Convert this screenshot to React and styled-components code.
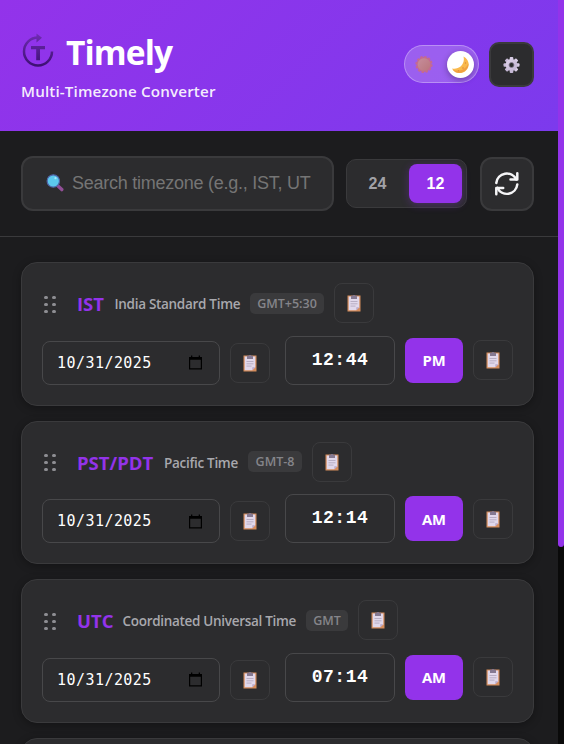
import React from "react";
import styled, { createGlobalStyle } from "styled-components";

const Global = createGlobalStyle`
  * { box-sizing: border-box; }
  html, body { margin: 0; height: 744px; overflow: hidden; background: #1c1c1e; }
  body { font-family: "Open Sans", "Noto Sans", sans-serif; color: #fff; }
  button, input { font-family: inherit; margin: 0; }
`;
const Window = styled.div`display: flex; width: 564px; height: 744px; overflow: hidden;`;
const Page = styled.main`width: 558px; height: 744px; overflow: hidden; background: #1c1c1e;`;
const Track = styled.div`width: 6px; height: 744px; background: #0a0a0a;`;
const Thumb = styled.div`height: 547px; background: #9333ea; border-radius: 0 0 3px 3px;`;

const Header = styled.header`
  display: flex; justify-content: space-between; align-items: flex-start;
  height: 131px; padding: 31px 24px 0 21px;
  background: linear-gradient(135deg, #9333ea 0%, #7c3aed 100%);
`;
const Brand = styled.div`display: flex; flex-direction: column;`;
const TitleRow = styled.div`display: flex; align-items: flex-start; gap: 11px; height: 48px;`;
const Title = styled.h1`
  margin: 0; font-size: 33.5px; line-height: 43px; font-weight: 700; white-space: nowrap;
  letter-spacing: -.9px;
`;
const Tagline = styled.p`
  margin: 0; font-size: 15.2px; line-height: 24px; font-weight: 600; color: rgba(255,255,255,.92);
  letter-spacing: .14px; white-space: nowrap;
`;
const HeaderActions = styled.div`display: flex; align-items: flex-start; gap: 10px; padding-top: 11px;`;
const ThemeSwitch = styled.div`
  display: flex; align-items: center; justify-content: space-between; margin-top: 3px;
  width: 75px; height: 38px; padding: 0 4px 0 10px; border-radius: 19px;
  border: 1px solid rgba(255,255,255,.3); background: rgba(255,255,255,.2);
`;
const Knob = styled.span`
  display: flex; align-items: center; justify-content: center; width: 27px; height: 27px;
  border-radius: 50%; background: #fff; box-shadow: 0 2px 6px rgba(0,0,0,.3);
`;
const SquareButton = styled.button`
  display: flex; align-items: center; justify-content: center; padding: 0;
  width: ${(p) => p.$size}px; height: ${(p) => p.$size}px; color: #fff;
  border: 2px solid #3a3a3c; border-radius: ${(p) => p.$radius}px; background: #2c2c2e;
`;
const Toolbar = styled.section`
  display: flex; align-items: center; height: 106px; padding: 0 24px 0 21px;
  border-bottom: 1px solid #3a3a3c;
`;
const Search = styled.div`
  display: flex; align-items: center; gap: 8px; width: 313px; height: 55px; padding: 0 14px 1px 23px;
  border: 2px solid #3a3a3c; border-radius: 12px; background: #2c2c2e; margin-right: 12px;
`;
const SearchText = styled.span`
  font: 18px/24px "Liberation Sans", Arial, sans-serif; color: #757575; white-space: nowrap;
  letter-spacing: -.25px;
`;
const Segments = styled.div`
  display: flex; gap: 5px; width: 121px; height: 49px; padding: 4px; margin-right: 13px;
  border: 1px solid #3a3a3c; border-radius: 10px; background: #2c2c2e;
`;
const Segment = styled.button`
  width: 53px; height: 39px; padding: 0; border: 0; border-radius: 8px;
  font: bold 16px "Liberation Sans", Arial, sans-serif;
  color: ${(p) => (p.$active ? "#fff" : "#a1a1a6")};
  background: ${(p) => (p.$active ? "#9333ea" : "transparent")};
  box-shadow: ${(p) => (p.$active ? "0 2px 8px rgba(147,51,234,.3)" : "none")};
`;
const List = styled.section`display: flex; flex-direction: column; gap: 15px; padding: 25px 24px 0 21px;`;
const Card = styled.article`
  flex: none; height: 143.5px; padding: 20px; border: 1px solid #3a3a3c; border-radius: 16px;
  background: #2c2c2e; box-shadow: 0 2px 8px rgba(0,0,0,.3);
`;
const CardHead = styled.div`display: flex; align-items: center; height: 40px;`;
const Grip = styled.div`
  display: grid; grid-template-columns: 4px 4px; gap: 4px; width: 35px; padding: 2px 0 0 2px;
`;
const Dot = styled.i`width: 4px; height: 3px; border-radius: 1.5px; background: #8e8e93;`;
const Code = styled.strong`
  width: ${(p) => p.$w}px; margin-right: 10px; padding-top: 2px; font-size: 18.5px; line-height: 26px;
  font-weight: 700; color: #9333ea; white-space: nowrap;
`;
const Name = styled.span`
  width: ${(p) => p.$w}px; margin-right: 10px; padding-top: 2px; font-size: 13.5px; line-height: 20px;
  font-weight: 600; color: #a8a8ad; white-space: nowrap; letter-spacing: -.3px;
`;
const Offset = styled.span`
  display: flex; align-items: center; justify-content: center; width: ${(p) => p.$w}px; height: 21px;
  margin-right: 10px; border-radius: 5px; background: #3a3a3c; color: #85858a;
  font-size: 12.5px; font-weight: 600; letter-spacing: 0; white-space: nowrap;
`;
const CopyButton = styled.button`
  display: flex; align-items: center; justify-content: center; flex: none; width: 40px; height: 40px;
  padding: 1px 0 0; border: 1px solid #3a3a3c; border-radius: 8px; background: transparent;
`;
const Fields = styled.div`display: flex; align-items: flex-end; gap: 15px; margin-top: 12.5px; height: 49px;`;
const Group = styled.div`display: flex; align-items: center; gap: 10px;`;
const DateField = styled.div`
  display: flex; align-items: center; justify-content: space-between; width: 178px; height: 44px;
  padding: 0 17px 0 14px; border: 1px solid #48484a; border-radius: 8px;
  font: 15px/20px "DejaVu Sans Mono", monospace; letter-spacing: .45px; color: #fff;
`;
const TimeField = styled.div`
  display: flex; align-items: center; justify-content: center; width: 110px; height: 49px;
  padding-bottom: 1px; border: 1px solid #48484a; border-radius: 8px;
  font: bold 18px/22px "Liberation Mono", monospace; letter-spacing: .5px;
`;
const Meridiem = styled.button`
  width: 58px; height: 45px; padding: 0; border: 0; border-radius: 8px; background: #9333ea;
  color: #fff; font-size: 14.8px; font-weight: 700;
`;

const Logo = () => (
  <svg width="34" height="38" viewBox="0 0 34 38" fill="none">
    <defs>
      <linearGradient id="ink" gradientUnits="userSpaceOnUse" x1="0" y1="2" x2="0" y2="36">
        <stop offset="0" stopColor="#712cb5" /><stop offset="1" stopColor="#3b0f70" />
      </linearGradient>
    </defs>
    <path d="M17 6.500A14 14 0 1 0 31 20.500" stroke="url(#ink)" strokeWidth="2.500" />
    <path d="M15.500 2.500l5.500 4.300L15.500 11.500z" fill="url(#ink)" />
    <path d="M10 15h14v3.300h-5v11h-3.800v-11H10z" fill="url(#ink)" />
  </svg>
);
const Sun = () => (
  <svg width="18" height="18" viewBox="0 0 18 18">
    <defs><linearGradient id="sun" x1="0" y1="0" x2="1" y2="1">
      <stop offset="0" stopColor="#c68d9c" /><stop offset="1" stopColor="#b9767c" />
    </linearGradient></defs>
    <circle cx="9" cy="9.500" r="7.600" fill="#c46a91" stroke="#c46a91" strokeWidth="2" strokeDasharray="2.300 1.680" />
    <circle cx="9" cy="9.500" r="6.300" fill="url(#sun)" />
  </svg>
);
const Moon = () => (
  <svg width="19" height="19" viewBox="0 0 19 19">
    <path d="M12.500 1.500C18.500 4.500 19.500 12 14.500 16C10 19.500 3.500 18.500 1 13.500C7.500 15 14.500 9.500 12.500 1.500Z" fill="#f9b94c" />
    <path d="M1.600 14.400c5.400 2.600 12.900 1.100 15.900-6.200 0 9-10.900 13.200-15.900 6.200Z" fill="#f0a040" />
    <g fill="#dc8a3a"><circle cx="14.500" cy="8" r=".7" /><circle cx="12" cy="13" r=".8" /><circle cx="7.500" cy="15.700" r=".7" /></g>
  </svg>
);
const Gear = () => (
  <svg width="18" height="18" viewBox="0 0 18 18">
    <defs><linearGradient id="gear" gradientUnits="userSpaceOnUse" x1="1" y1="1" x2="17" y2="17">
      <stop offset="0" stopColor="#e5daf0" /><stop offset="1" stopColor="#b7a9c9" />
    </linearGradient></defs>
    <g fill="url(#gear)">
      {[0, 45, 90, 135].map((a) => <rect key={a} x="6.7" y="1" width="3.6" height="16" rx="1" transform={`rotate(${a} 8.500 9)`} />)}
      <circle cx="8.500" cy="9" r="5.900" />
    </g>
    <circle cx="8.500" cy="9" r="2.500" fill="#2c2c2e" stroke="#8d8299" strokeWidth=".8" />
  </svg>
);
const Magnifier = () => (
  <svg width="18" height="18" viewBox="0 0 18 18">
    <path d="M12 12l3.800 3.600" stroke="#914f96" strokeWidth="3.400" strokeLinecap="round" />
    <circle cx="7.300" cy="7" r="6.200" fill="#5cc9ee" stroke="#5064a8" strokeWidth="1.200" />
    <circle cx="9.500" cy="4.200" r="1.100" fill="#a9e9fa" />
  </svg>
);
const Refresh = () => (
  <svg width="26" height="26" viewBox="0 0 26 26" fill="none" stroke="#f5f5f7" strokeWidth="2.500" strokeLinecap="round" strokeLinejoin="round">
    <path d="M2.300 12A10.500 10.500 0 0 1 22.200 8.500M23.300 13.400A10.500 10.500 0 0 1 3.400 16.900" />
    <path d="M23.300 2.200V8.500H16.500M2.300 23.200V16.900H9.200" />
  </svg>
);
const Clipboard = () => (
  <svg width="14" height="17" viewBox="0 0 14 17">
    <path d="M.5.5h13v16H.5z" fill="#d58c5b" />
    <path d="M1.700 1.500h10.600v10.700L9.300 15.300H1.700z" fill="#e1d8eb" />
    <path d="M12.300 12.200L9.300 15.300v-3.100z" fill="#b9a9ca" />
    <path d="M4 .8h1.500C5.700-.2 8.300-.2 8.500.8H10v3.200H4z" fill="#857991" />
    <path d="M3.500 6.500h7M3.500 8.800h7M3.500 11.100h5" stroke="#b3a9c0" strokeWidth=".9" />
  </svg>
);
const Calendar = () => (
  <svg width="13" height="15" viewBox="0 0 13 15">
    <path d="M.6 2.500h11.800v11.300H.6z" fill="none" stroke="#000" strokeWidth="1.200" />
    <path d="M0 2h13v2.800H0zM2 .5h1.300V3H2zM9.700.5H11V3H9.700z" fill="#000" />
  </svg>
);

const zones = [
  { code: "IST", codeWidth: 27.5, name: "India Standard Time", nameWidth: 125.5, offset: "GMT+5:30", offsetWidth: 74, time: "12:44", meridiem: "PM" },
  { code: "PST/PDT", codeWidth: 77, name: "Pacific Time", nameWidth: 74, offset: "GMT-8", offsetWidth: 54, time: "12:14", meridiem: "AM" },
  { code: "UTC", codeWidth: 35.5, name: "Coordinated Universal Time", nameWidth: 173.5, offset: "GMT", offsetWidth: 42, time: "07:14", meridiem: "AM" },
];

const Zone = ({ z }) => (
  <Card>
    <CardHead>
      <Grip>{[0, 1, 2, 3, 4, 5].map((i) => <Dot key={i} />)}</Grip>
      <Code $w={z.codeWidth}>{z.code}</Code>
      <Name $w={z.nameWidth}>{z.name}</Name>
      <Offset $w={z.offsetWidth}>{z.offset}</Offset>
      <CopyButton aria-label="Copy"><Clipboard /></CopyButton>
    </CardHead>
    <Fields>
      <Group>
        <DateField>10/31/2025<Calendar /></DateField>
        <CopyButton aria-label="Copy date"><Clipboard /></CopyButton>
      </Group>
      <Group>
        <TimeField>{z.time}</TimeField>
        <Meridiem>{z.meridiem}</Meridiem>
        <CopyButton aria-label="Copy time"><Clipboard /></CopyButton>
      </Group>
    </Fields>
  </Card>
);

export default function App() {
  return (
    <Window>
      <Global />
      <Page>
        <Header>
          <Brand>
            <TitleRow><Logo /><Title>Timely</Title></TitleRow>
            <Tagline>Multi-Timezone Converter</Tagline>
          </Brand>
          <HeaderActions>
            <ThemeSwitch><Sun /><Knob><Moon /></Knob></ThemeSwitch>
            <SquareButton $size={45} $radius={10} aria-label="Settings"><Gear /></SquareButton>
          </HeaderActions>
        </Header>
        <Toolbar>
          <Search><Magnifier /><SearchText>Search timezone (e.g., IST, UT</SearchText></Search>
          <Segments><Segment>24</Segment><Segment $active>12</Segment></Segments>
          <SquareButton $size={54} $radius={12} aria-label="Refresh"><Refresh /></SquareButton>
        </Toolbar>
        <List>
          {zones.map((z) => <Zone key={z.code} z={z} />)}
          <Card />
        </List>
      </Page>
      <Track><Thumb /></Track>
    </Window>
  );
}
